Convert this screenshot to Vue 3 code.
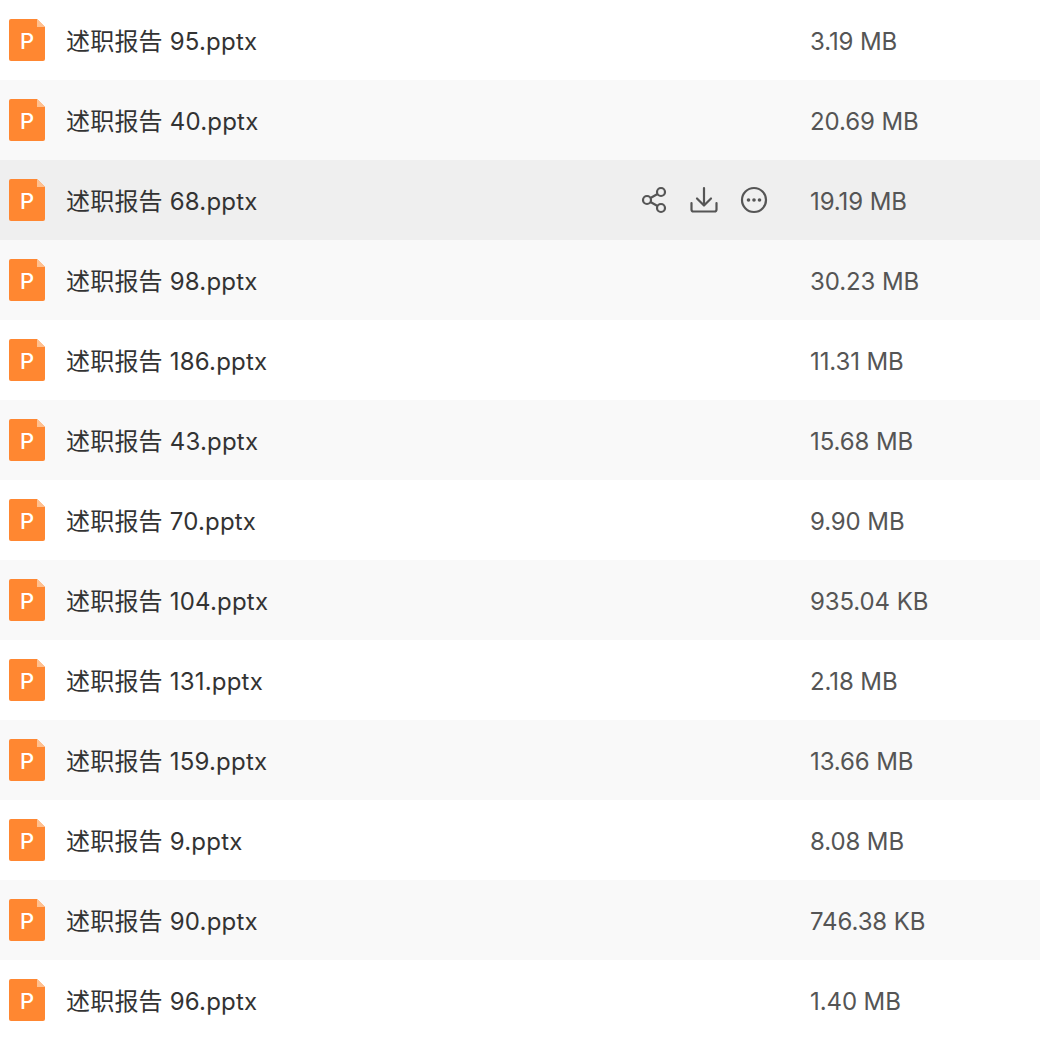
<script setup>
const rows = [
  ['述职报告 95.pptx', '3.19 MB'],
  ['述职报告 40.pptx', '20.69 MB'],
  ['述职报告 68.pptx', '19.19 MB'],
  ['述职报告 98.pptx', '30.23 MB'],
  ['述职报告 186.pptx', '11.31 MB'],
  ['述职报告 43.pptx', '15.68 MB'],
  ['述职报告 70.pptx', '9.90 MB'],
  ['述职报告 104.pptx', '935.04 KB'],
  ['述职报告 131.pptx', '2.18 MB'],
  ['述职报告 159.pptx', '13.66 MB'],
  ['述职报告 9.pptx', '8.08 MB'],
  ['述职报告 90.pptx', '746.38 KB'],
  ['述职报告 96.pptx', '1.40 MB'],
]
</script>

<template>
  <div class="list">
    <div v-for="(r, i) in rows" :key="i" class="row" :class="{ even: i % 2 === 1, hover: i === 2 }">
      <span class="file-icon">
        <span class="fold"></span>
        <span class="p">P</span>
      </span>
      <span class="name">{{ r[0] }}</span>
      <span v-if="i === 2" class="actions">
        <svg width="30" height="30" viewBox="0 0 30 30" fill="none" stroke="#555" stroke-width="2.2">
          <circle cx="8" cy="15" r="4" />
          <circle cx="22" cy="7" r="4" />
          <circle cx="22" cy="23" r="4" />
          <path d="M11.500 13 18.500 9M11.500 17 18.500 21" />
        </svg>
        <svg width="30" height="30" viewBox="0 0 30 30" fill="none" stroke="#555" stroke-width="2.2" stroke-linecap="round" stroke-linejoin="round">
          <path d="M15 3V20M8 13.500 15 20.500l7-7" />
          <path d="M2.500 18v6.500a2 2 0 0 0 2 2h21a2 2 0 0 0 2-2V18" />
        </svg>
        <svg width="30" height="30" viewBox="0 0 30 30" fill="none">
          <circle cx="15" cy="15" r="12" stroke="#555" stroke-width="2.2" />
          <circle cx="9.500" cy="15" r="1.800" fill="#555" />
          <circle cx="15" cy="15" r="1.800" fill="#555" />
          <circle cx="20.500" cy="15" r="1.800" fill="#555" />
        </svg>
      </span>
      <span class="size">{{ r[1] }}</span>
    </div>
  </div>
</template>

<style scoped>
.list {
  width: 1040px;
  font-family: "Inter", "Noto Sans CJK SC", sans-serif;
}
.row {
  position: relative;
  height: 80px;
  display: flex;
  align-items: center;
  background: #fff;
  padding-left: 9px;
  box-sizing: border-box;
}
.row.even { background: #f9f9f9; }
.row.hover { background: #efefef; }
.file-icon {
  position: relative;
  flex: none;
  width: 36px;
  height: 42px;
  border-radius: 2px;
  background: #ff8731;
  display: flex;
  align-items: center;
  justify-content: center;
  clip-path: polygon(0 0, 28px 0, 36px 8px, 36px 42px, 0 42px);
}
.fold {
  position: absolute;
  top: 0;
  right: 0;
  width: 8px;
  height: 8px;
  background: #ffc08f;
  clip-path: polygon(0 0, 100% 100%, 0 100%);
}
.p {
  color: #fff;
  font-family: "Inter", sans-serif;
  font-size: 22px;
  font-weight: 500;
  line-height: 1;
  padding-top: 2px;
}
.name {
  margin-left: 21px;
  flex: 1;
  padding-top: 4px;
  font-size: 24px;
  letter-spacing: 0.2px;
  color: #333;
  line-height: 34px;
}
.actions {
  position: absolute;
  left: 639px;
  top: 25px;
  display: flex;
  gap: 20px;
}
.size {
  width: 230px;
  flex: none;
  padding-top: 4px;
  font-size: 24px;
  letter-spacing: -0.1px;
  color: #555;
  line-height: 34px;
}
</style>

<style>
html, body { margin: 0; overflow: hidden; }
</style>
